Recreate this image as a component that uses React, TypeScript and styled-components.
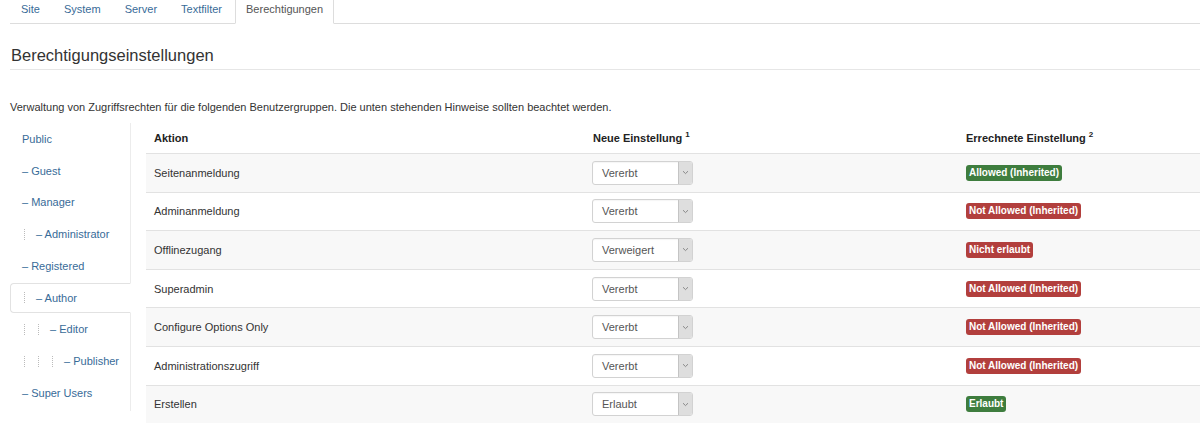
import React from "react";
import styled, { createGlobalStyle } from "styled-components";

const Global = createGlobalStyle`
  html, body { margin: 0; padding: 0; background: #fff; }
  body { font-family: "Liberation Sans", Arial, sans-serif; font-size: 11px; color: #333; }
  * { box-sizing: border-box; }
`;

const Page = styled.div`
  width: 1200px;
  height: 423px;
  overflow: hidden;
`;

const TabBar = styled.ul`
  display: flex;
  list-style: none;
  margin: 0 0 0 10px;
  padding: 0;
  border-bottom: 1px solid #ddd;
  height: 24px;
`;

const Tab = styled.li<{ $active?: boolean }>`
  margin-right: 2px;
  padding: 1px 10px 6px;
  line-height: 16px;
  font-size: 11px;
  color: ${(p) => (p.$active ? "#555" : "#386b98")};
  background: ${(p) => (p.$active ? "#fff" : "transparent")};
  border: 1px solid ${(p) => (p.$active ? "#ddd" : "transparent")};
  border-bottom-color: transparent;
  border-top: none;
  height: 24px;
  margin-bottom: -1px;
`;

const Heading = styled.h2`
  margin: 21px 0 0 10px;
  padding: 0 0 4px 1px;
  font-size: 16.5px;
  font-weight: normal;
  line-height: 20px;
  color: #333;
  border-bottom: 1px solid #e6e6e6;
`;

const Description = styled.p`
  margin: 27px 0 6px 10px;
  line-height: 20px;
  font-size: 11px;
  color: #333;
`;

const Main = styled.div`
  display: flex;
  gap: 15px;
  margin-left: 10px;
`;

const Nav = styled.ul`
  list-style: none;
  margin: 0;
  padding: 1px 0 0;
  width: 121px;
  border-right: 1px solid #ececec;
  height: 288px;
`;

const NavItem = styled.li<{ $active?: boolean }>`
  display: flex;
  align-items: center;
  height: 29.75px;
  margin-bottom: 2px;
  padding-left: 11px;
  color: #386b98;
  font-size: 11px;
  border: 1px solid ${(p) => (p.$active ? "#e2e2e2" : "transparent")};
  border-right-color: ${(p) => (p.$active ? "#fff" : "transparent")};
  border-radius: 4px 0 0 4px;
  background: ${(p) => (p.$active ? "#fff" : "transparent")};
  margin-right: ${(p) => (p.$active ? "-1px" : "0")};
`;

const Level = styled.span`
  display: inline-block;
  width: 15px;
  height: 11px;
  margin-left: 2px;
  margin-right: -3px;
  border-left: 1px dotted #bbb;
  flex-shrink: 0;
`;

const Table = styled.div`
  width: 1054px;
`;

const Row = styled.div<{ $striped?: boolean; $head?: boolean }>`
  display: grid;
  grid-template-columns: 439px 373px 1fr;
  align-items: center;
  height: ${(p) => (p.$head ? "30px" : "38.6px")};
  background: ${(p) => (p.$striped ? "#f8f8f8" : "#fff")};
  border-top: ${(p) => (p.$head ? "none" : "1px solid #e2e2e2")};
  font-weight: ${(p) => (p.$head ? "bold" : "normal")};
  color: ${(p) => (p.$head ? "#222" : "#333")};
`;

const Cell = styled.div`
  padding: 0 8px;
  white-space: nowrap;
`;

const Sup = styled.sup`
  font-size: 8px;
  margin-left: 3px;
  vertical-align: 5px;
  line-height: 0;
`;

const Select = styled.div`
  display: flex;
  width: 101px;
  height: 24px;
  margin-left: -1px;
  border: 1px solid #d2d2d2;
  border-radius: 3px;
  background: #fff;
  overflow: hidden;
  box-shadow: inset 0 1px 1px rgba(0, 0, 0, 0.04);
`;

const SelectText = styled.span`
  flex: 1;
  padding-left: 9px;
  line-height: 22px;
  color: #555;
  font-size: 11px;
`;

const SelectArrow = styled.span`
  width: 14px;
  display: flex;
  align-items: center;
  justify-content: center;
  background: #dedede;
  border-left: 1px solid #c4c4c4;
`;

const Badge = styled.span<{ $ok: boolean }>`
  display: inline-block;
  padding: 0 3px;
  height: 16px;
  line-height: 16px;
  font-size: 10px;
  font-weight: bold;
  color: #fff;
  border-radius: 3px;
  background: ${(p) => (p.$ok ? "#3e7d3e" : "#b23f3d")};
`;

const Chevron = () => (
  <svg width="7" height="5" viewBox="0 0 7 5">
    <path d="M1 1.2 L3.5 3.6 L6 1.2" fill="none" stroke="#888" strokeWidth="1" />
  </svg>
);

const groups: { label: string; level: number; active?: boolean }[] = [
  { label: "Public", level: 0 },
  { label: "– Guest", level: 0 },
  { label: "– Manager", level: 0 },
  { label: "– Administrator", level: 1 },
  { label: "– Registered", level: 0 },
  { label: "– Author", level: 1, active: true },
  { label: "– Editor", level: 2 },
  { label: "– Publisher", level: 3 },
  { label: "– Super Users", level: 0 },
];

const rows: { action: string; setting: string; result: string; ok: boolean }[] = [
  { action: "Seitenanmeldung", setting: "Vererbt", result: "Allowed (Inherited)", ok: true },
  { action: "Adminanmeldung", setting: "Vererbt", result: "Not Allowed (Inherited)", ok: false },
  { action: "Offlinezugang", setting: "Verweigert", result: "Nicht erlaubt", ok: false },
  { action: "Superadmin", setting: "Vererbt", result: "Not Allowed (Inherited)", ok: false },
  { action: "Configure Options Only", setting: "Vererbt", result: "Not Allowed (Inherited)", ok: false },
  { action: "Administrationszugriff", setting: "Vererbt", result: "Not Allowed (Inherited)", ok: false },
  { action: "Erstellen", setting: "Erlaubt", result: "Erlaubt", ok: true },
];

const tabs = ["Site", "System", "Server", "Textfilter", "Berechtigungen"];

export default function App() {
  return (
    <Page>
      <Global />
      <TabBar>
        {tabs.map((t) => (
          <Tab key={t} $active={t === "Berechtigungen"}>
            {t}
          </Tab>
        ))}
      </TabBar>
      <Heading>Berechtigungseinstellungen</Heading>
      <Description>
        Verwaltung von Zugriffsrechten für die folgenden Benutzergruppen. Die unten stehenden Hinweise sollten beachtet werden.
      </Description>
      <Main>
        <Nav>
          {groups.map((g) => (
            <NavItem key={g.label} $active={g.active}>
              {Array.from({ length: g.level }).map((_, i) => (
                <Level key={i} />
              ))}
              <span>{g.label}</span>
            </NavItem>
          ))}
        </Nav>
        <Table>
          <Row $head>
            <Cell>Aktion</Cell>
            <Cell>
              Neue Einstellung<Sup>1</Sup>
            </Cell>
            <Cell>
              Errechnete Einstellung<Sup>2</Sup>
            </Cell>
          </Row>
          {rows.map((r, i) => (
            <Row key={r.action} $striped={i % 2 === 0}>
              <Cell>{r.action}</Cell>
              <Cell>
                <Select>
                  <SelectText>{r.setting}</SelectText>
                  <SelectArrow>
                    <Chevron />
                  </SelectArrow>
                </Select>
              </Cell>
              <Cell>
                <Badge $ok={r.ok}>{r.result}</Badge>
              </Cell>
            </Row>
          ))}
        </Table>
      </Main>
    </Page>
  );
}
